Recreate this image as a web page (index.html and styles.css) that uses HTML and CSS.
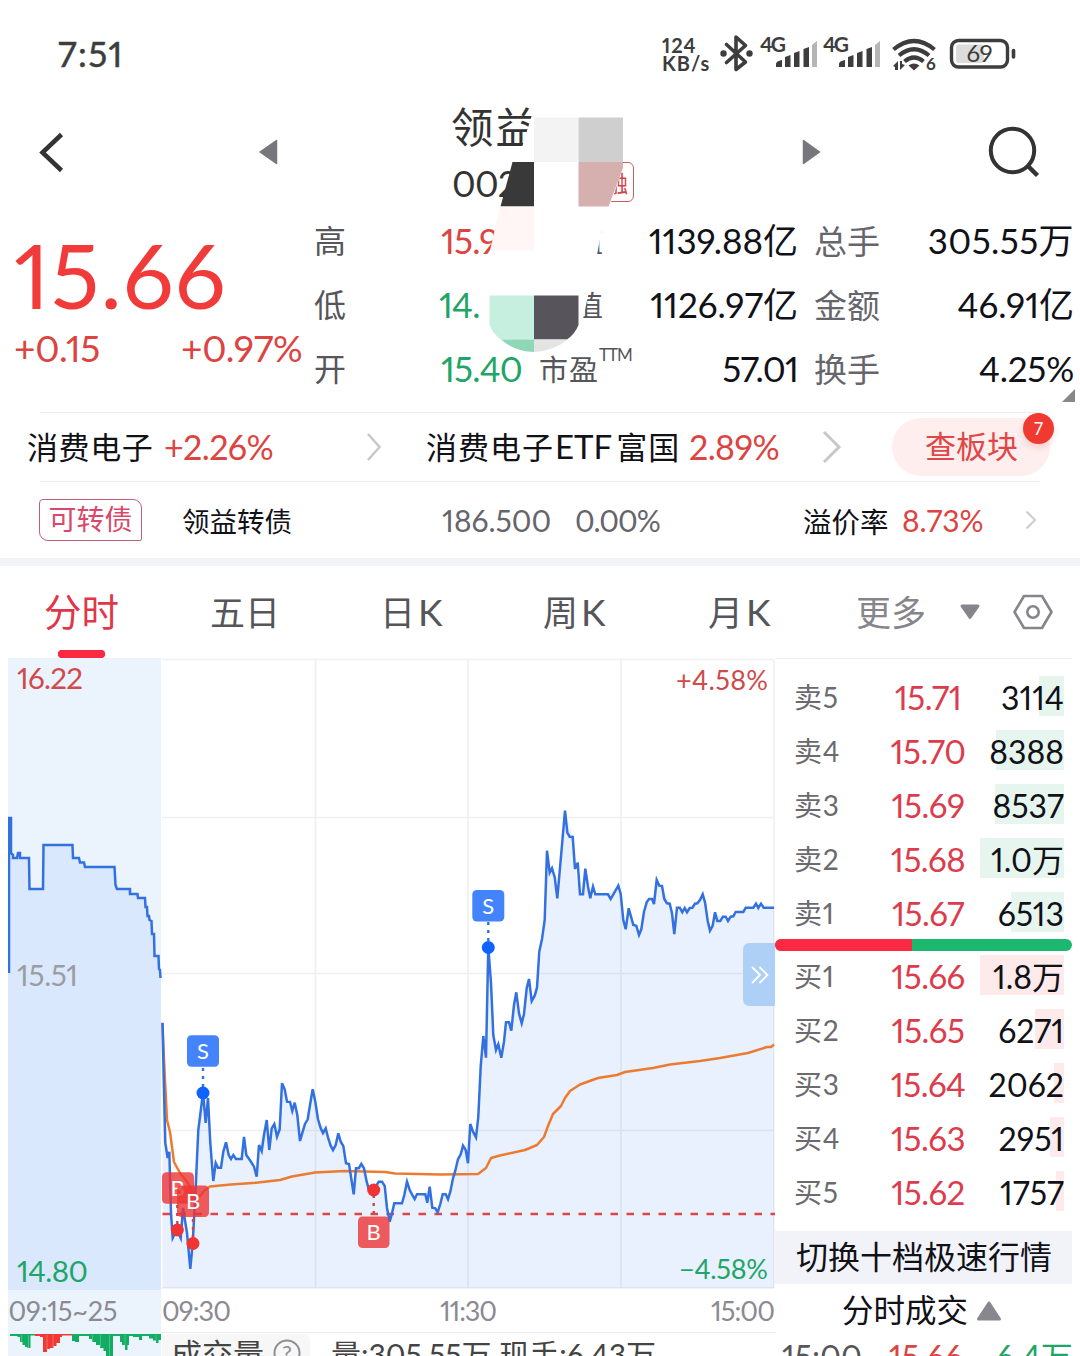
FILE: index.html
```html
<!DOCTYPE html>
<html lang="zh-CN">
<head>
<meta charset="utf-8">
<title>领益 分时</title>
<link rel="stylesheet" href="styles.css">
</head>
<body>
<div class="screen">
  <div class="status">
    <span class="clock">7:51</span>
    <span class="speed"><b>124</b><b>KB/s</b></span>
    <svg class="status-icons" width="300" height="50" viewBox="718 30 300 50">
      <g fill="none" stroke="#3d3d3d" stroke-width="3.6" stroke-linejoin="round" stroke-linecap="round">
        <path d="M726.500 44.500L745.500 62L736 69.500V37L745.500 45.500L726.500 62.500"/>
      </g>
      <circle cx="723.500" cy="53.500" r="3.200" fill="#3d3d3d"/><circle cx="749.500" cy="53.500" r="3.200" fill="#3d3d3d"/>
      <g class="net"><text x="760" y="52" textLength="26">4G</text><text x="823" y="52" textLength="26">4G</text></g>
      <g fill="#3d3d3d">
        <path d="M776 67v-3q0-3 6-4v7zM785 67v-10l5.500-2v12zM794 67v-14l5.500-2v16zM803.500 67v-18l5.500-2v20z"/>
        <path d="M839 67v-3q0-3 6-4v7zM848 67v-10l5.500-2v12zM857 67v-14l5.500-2v16zM866.500 67v-18l5.500-2v20z"/>
        <path fill="#b5b5b5" d="M812 67v-22l5-4v26zM875 67v-22l5-4v26z"/>
      </g>
      <g fill="none" stroke="#3d3d3d" stroke-width="4.200">
        <path d="M893.500 49.500Q914 32.500 934.500 49.500M899 55.500Q914 43 929 55.500M904.500 61.500Q914 53.500 923.500 61.500"/>
      </g>
      <path fill="#3d3d3d" d="M908.500 65.500q5.500-4 11 0l-5.500 5zM893 66l5-5v9h-3v-3zM905 65l-5 5v-9h2v3z"/>
      <text class="six" x="926" y="70">6</text>
      <rect x="951.500" y="40.500" width="56" height="26.500" rx="7" fill="none" stroke="#3d3d3d" stroke-width="3.400"/>
      <rect x="956" y="44.500" width="28" height="18.500" rx="3" fill="#dcdcdc"/>
      <path d="M1013.500 50.500v6.500" stroke="#3d3d3d" stroke-width="3.600" stroke-linecap="round"/>
      <text class="bat" x="966.500" y="62" textLength="26">69</text>
    </svg>
  </div>

  <div class="nav">
    <svg width="28" height="44" viewBox="38 130 28 44"><path d="M61.500 134.500L42.500 152.500L61.500 170.500" fill="none" stroke="#333" stroke-width="4.500"/></svg>
    <svg width="20" height="26" viewBox="258 139 20 26"><path d="M260 152L276.500 140.500V163.500Z" fill="#77767c" stroke="#77767c" stroke-width="1.500" stroke-linejoin="round"/></svg>
    <div class="title">
      <span class="name">领益</span>
      <span class="code"><i>002</i><em>融</em></span>
    </div>
    <svg width="20" height="26" viewBox="802 139 20 26"><path d="M819.500 152L803.500 140.500V163.500Z" fill="#77767c" stroke="#77767c" stroke-width="1.500" stroke-linejoin="round"/></svg>
    <svg width="54" height="54" viewBox="987 125 54 54"><circle cx="1012.500" cy="150.500" r="21.700" fill="none" stroke="#333" stroke-width="4"/><path d="M1028 166L1037.500 175.500" stroke="#333" stroke-width="4.500"/></svg>
    <svg class="mosaic" width="160" height="250" viewBox="480 108 160 250">
      <path fill="#fff" d="M534 108H640V160H623V168L602 228L597 255L583 319V330H579L567 345L534 352L500 345L483 322V255H491L512 180Z"/>
      <path fill="#f3f3f3" d="M534 117.500h44.500v44.500h-44.500z"/><path fill="#cfcfcf" d="M578.500 117.500h44.500v44.500h-44.500z"/>
      <path fill="#393939" d="M512.500 162H534V206.500H500.500Z"/><path fill="#d6b0af" d="M578.500 162H623V168L608.500 206.500H578.500Z"/>
      <path fill="#fff6f5" d="M500 206.500H534V250.500H490Z"/>
      <path fill="#c6efdf" d="M489.500 295.500H534V339.500H501Q493 334 489.500 325Z"/><path fill="#57555b" d="M534 295.500H578.500V325Q575 334 567 339.500H534Z"/>
      <path fill="#90d7b8" d="M501 339.500H534V352Q514 351 501 339.500Z"/><path fill="#e4e4e4" d="M534 339.500H567.500Q554 351 534 352Z"/>
    </svg>
  </div>

  <div class="quote">
    <div class="last red"><span class="price">15.66</span><div class="change"><span class="chg">+0.15</span><span class="pct">+0.97%</span></div></div>
    <div class="stats">
      <span class="k">高</span><span class="v red">15.9</span><span class="k2 frag">值</span><span class="r">1139.88亿</span><span class="k3">总手</span><span class="r wide">305.55万</span>
      <span class="k">低</span><span class="v green low">14.</span><span class="k2 frag">值</span><span class="r">1126.97亿</span><span class="k3">金额</span><span class="r">46.91亿</span>
      <span class="k">开</span><span class="v green">15.40</span><span class="k2">市盈<sup>TTM</sup></span><span class="r tight">57.01</span><span class="k3">换手</span><span class="r pc">4.25%</span>
    </div>
    <svg class="corner" width="13" height="13"><path d="M13 0V13H0Z" fill="#88878c"/></svg>
  </div>

  <div class="sectors">
    <span>消费电子</span><span class="red up">+2.26%</span>
    <svg width="16" height="30" viewBox="0 0 16 30"><path d="M2 2L13.500 15L2 28" fill="none" stroke="#c8c8c8" stroke-width="2.500"/></svg>
    <span class="etf">消费电子<i>ETF</i>富国</span><span class="red">2.89%</span>
    <svg width="20" height="34" viewBox="0 0 20 34"><path d="M2 2L17 17L2 32" fill="none" stroke="#c8c8c8" stroke-width="3"/></svg>
    <div class="pill">查板块<b>7</b></div>
  </div>

  <div class="bond">
    <span class="tag">可转债</span><span>领益转债</span><span class="num">186.500</span><span class="num zero">0.00%</span><span class="prem">溢价率</span><span class="num red">8.73%</span>
    <svg width="12" height="20" viewBox="0 0 12 20"><path d="M1.500 1.500L10 10L1.500 18.500" fill="none" stroke="#ccc" stroke-width="2"/></svg>
  </div>

  <div class="tabs">
    <span class="on">分时</span><span>五日</span><span>日<i>K</i></span><span>周<i>K</i></span><span>月<i>K</i></span><span class="more">更多</span>
    <svg width="22" height="16" viewBox="0 0 22 16"><path d="M3 2H19L11 13.500Z" fill="#86858b" stroke="#86858b" stroke-width="3" stroke-linejoin="round"/></svg>
    <svg width="42" height="38" viewBox="0 0 42 38"><path d="M12 3H30L39.500 19L30 35H12L2.500 19Z" fill="none" stroke="#86858b" stroke-width="2.600" stroke-linejoin="round"/><circle cx="21" cy="19" r="5.700" fill="none" stroke="#86858b" stroke-width="2.600"/></svg>
  </div>

  <div class="main">
    <div class="left">
      <svg class="chart" width="767" height="632" viewBox="8 658 767 632">
        <rect x="8" y="658" width="153" height="632" fill="#ebf3fd"/>
        <path fill="#dae8fd" d="M8 818H11V853L13 858H29L29.500 889H43L43.500 845H72.500L73 858H79L80 862.500H84L85 867H114.500L115.500 885L117 889H130V894H137.500L138 898H145L147 912L151.500 921L154 934L154.500 956H158.500L161 978V1290H8Z"/>
        <path fill="#e9f0fe" d="M162.500 1023L165 1143L168 1158L171 1213L173 1238H181L183 1208L187 1233L190 1269L193 1243L198 1130L203 1093L208 1098L213 1181L216 1163L221 1168L226 1142L231 1159H242L244 1137L248 1158L257 1177L259 1145L267 1120L270 1146L274 1124L280 1129L282 1083L287 1102L292 1111L295 1103L300 1141L308 1119L313 1089L318 1119L326 1130L333 1150L338 1133L346 1163L349 1164L354 1194L356 1168L361 1164L369 1190H374L379 1182H382L390 1222L394 1203H402L407 1182L415 1199L425 1194L430 1187L432 1208L438 1212L443 1194L448 1199L463 1146L468 1163L470 1124L476 1137L483 1036L486 1057L488 947L493 1035L501 1057L506 1022L511 1030L516 992L522 1023L529 979L532 1001L537 988L545 920L547 851L557 898L565 811L573 837L575 869L580 894L585 869L590 898L595 894H608L618 886L626 929L629 908L639 935L647 902L654 904L657 880L662 886L670 904L674 934L677 908H692L703 894L710 930L715 912L728 921L745 908H774V1288H162.500Z"/>
        <g stroke="#2f405c" stroke-opacity=".08" stroke-width="1.600" fill="none">
          <path d="M162 659.500H774M162 817.500H774M162 973.500H774M162 1130.500H774M162 1288H774M315.500 660V1288M468 660V1288M621 660V1288M774 660V1288"/>
        </g>
        <path d="M162.500 1214H775" stroke="#e04548" stroke-width="2.300" stroke-dasharray="7.500 8.500"/>
        <path fill="none" stroke="#ec7b30" stroke-width="2.500" stroke-linejoin="round" d="M162.500 1023L164 1060L167 1120L170 1132L174 1162L180 1173L188 1183L193 1195L199 1197L205 1190L210 1186.500L231 1184.500L256 1182.700L280 1180L292 1176.500L315 1172.500L345 1171L385 1172L395 1173.500L440 1174.500L478 1174L486 1168L491 1158L500 1155.500L525 1150L537 1145L544 1137L548 1126L553 1114L561 1106L565 1098L570 1091L580 1084.500L598 1078L617 1075L625 1072L653 1068L670 1064.500L700 1061L720 1058L748 1053L767 1047L771 1047L774 1044.500"/>
        <g fill="none" stroke="#3371e0" stroke-width="2.500" stroke-linejoin="miter">
          <path d="M9 973V818H11V853L13 855V858H17L18 853H20V858H29L29.500 889H43L43.500 845H72.500L73 858H79L80 862.500H84L85 867H114.500L115.500 885L117 889H130V894H137.500L138 898H145L145.500 907H147L147.500 916H149L149.500 920L151.500 921L152 934H154L154.500 956H158.500L159 969L160 970L160.500 978"/>
          <path d="M162.500 1022.700L163.700 1077L165.300 1143L167.700 1158L169.300 1151.700L171 1213L172.700 1238L177 1230L180.700 1238L183 1208L187 1233L190.300 1269L192.700 1243L195.700 1187L198.300 1130L203 1093L205.700 1123L208 1098L210.300 1143L213.300 1181L215.700 1163L218 1167.700H221L223.300 1151.700L226 1142.300L228.700 1155L231 1159L233.300 1155L236 1159H241.700L244 1137L246.300 1155L251.300 1162.300L254 1166.700L256.700 1176.700L259 1145L261.700 1151L264 1135L266.700 1120L269.300 1150L271.700 1128.300L274.300 1124L277 1136.700L279.700 1129.300L282 1083.300L284.700 1089.300L287 1101.700L290 1102L292.300 1111L294.700 1102.700L297.300 1115L300 1141L302.700 1131.700L305 1124L307.700 1119.300L310 1105L312.700 1089.300L315.300 1101.700L318 1119.300L320.700 1128.300L323 1133L325.700 1128.300L328 1137.300L330.700 1145.700L333 1150L335.700 1145L338.300 1133.300L340.700 1141.700L343.300 1146L346 1163.300L349 1164L351 1176.700L353.700 1194.300L356 1168.300H358.700L361.300 1164L364 1168.300L366.700 1181.700L369 1190H374L376.700 1185L378.700 1181.700H382L384.700 1186L387 1208L389.700 1221.700L392 1213.300L394.300 1203.300H402L404.300 1195L407 1181.700L409.700 1190L412 1194.300L414.700 1199L417 1194.300H425.300L427.300 1202.700L429.700 1186.700L432.300 1207.700L435.300 1208.300L437.700 1212.300L440.300 1204L442.700 1194.300H445.700L448 1199.300L450.300 1191.700L453 1178.300L455.300 1170.700L458 1159.300L460.700 1154.300L463 1145.700L465.700 1150L468 1163.300L470.300 1124L473 1131.700L476 1137.300L478.300 1117L480.700 1066.700L483.300 1036L486 1057.700L488.300 947L491 983L493.300 1035L496 1050L498.300 1044.300L501.300 1057.700L504 1041.700L506 1022.300H509L511.300 1030.700L514 1005L516.300 992.300L519 1013.300L521.700 1023.300L524 1014L526.700 988.300L529 979L531.700 1001L534.700 995.700L537 987.700L539.300 951.700L542 939L544.700 920L547 850.700L549.700 872.700L552 868.300L554.700 877.300L557.300 898.300L562.300 841.700L565 810.700L567.300 832.700L569.700 836.700L572.700 837L575 869L577.700 862.700L580 894.300H583L585.300 868.700L588 886.700L590.300 898.300L593 886.700L595.300 894.300H608L610.700 899L618.300 885.700L620.700 894L623.300 920L625.700 929.300L628.700 908.300L633.300 925L636.300 925.700L639 935L641.300 929.300L644 911.700L646.700 902.300L649 899H652L654 904L656.700 880L659.300 885.700L662 886L664.300 899L667 903.300L669.700 903.700L672 913.300L674.300 934L677 907.700H679.700L682.300 912.300L684.700 908L687 912.300L689.700 908L692.300 907.700L695 903.700L697.300 903.300L700 900L702.700 894.300L705 902.300L707.700 920.700L710 930.700L712.700 925.700L715 912.300L717.300 921H720.300L723 916.700H725.700L728 921L730.700 916.700L733.300 916.300L735.700 912H743.300L745.700 907.700H753.300L756 903.700L758.300 908L761 903.700L763.700 907.700H774"/>
        </g>
        <g stroke-width="2.400" stroke-dasharray="3 5">
          <path stroke="#3371e0" d="M203 1068V1088M488.300 922V942"/>
          <path stroke="#d04347" d="M177.300 1205V1226M193 1219V1240M373.700 1195V1216"/>
        </g>
        <circle cx="203" cy="1093" r="6.500" fill="#0f62fe"/><circle cx="488.300" cy="947.500" r="6.500" fill="#0f62fe"/>
        <g fill="#ee3434"><circle cx="177.300" cy="1230" r="6.500"/><circle cx="193" cy="1243.500" r="6.500"/><circle cx="373.700" cy="1190" r="6.500"/></g>
        <g class="mark">
          <rect x="187" y="1035.300" width="32" height="31.500" rx="4.500" fill="#4384fc"/><text x="203" y="1059">S</text>
          <rect x="472.300" y="890" width="32" height="31.500" rx="4.500" fill="#4384fc"/><text x="488.300" y="914">S</text>
          <g fill-opacity=".8"><rect x="162" y="1172.300" width="32" height="31.500" rx="4.500" fill="#ec3535"/></g><text x="177.500" y="1196">B</text>
          <g fill-opacity=".8"><rect x="177" y="1185.500" width="32" height="31.500" rx="4.500" fill="#ec3535"/><rect x="358" y="1216.500" width="31.500" height="31.500" rx="4.500" fill="#ec3535"/></g>
          <text x="193" y="1209">B</text><text x="373.700" y="1240">B</text>
        </g>
        <path d="M775 943H750Q743 943 743 950V999Q743 1006 750 1006H775Z" fill="#aed0f6"/>
        <path d="M752 967L760 975L752 983M759.500 967L767.500 975L759.500 983" fill="none" stroke="#fff" stroke-width="1.800"/>
        <g class="axis">
          <text x="17" y="688.500" textLength="66" fill="#d04a4b">16.22</text>
          <text x="17" y="985.500" textLength="61" fill="#9a9da2">15.51</text>
          <text x="17" y="1282" textLength="71" fill="#1fa567">14.80</text>
          <text x="676" y="690" textLength="92" class="sm" fill="#d04a4b">+4.58%</text>
          <text x="679" y="1279" textLength="89" class="sm" fill="#1fa567">−4.58%</text>
        </g>
      </svg>
      <svg class="times" width="767" height="42" viewBox="8 1290 767 42">
        <rect x="8" y="1290" width="153" height="42" fill="#ebf3fd"/>
        <text x="8.500" y="1321" textLength="109">09:15~25</text><text x="162" y="1321" textLength="69">09:30</text><text x="440" y="1321" textLength="57">11:30</text><text x="711" y="1321" textLength="64">15:00</text>
      </svg>
      <div class="volume">
        <svg width="154" height="24" viewBox="8 1332 154 24">
          <rect x="8" y="1332" width="153" height="24" fill="#ebf3fd"/>
          <path fill="#10ad62" d="M10 1334H37V1335.500H30.500V1348H27.500V1347H25V1345H22.500V1342H20V1337H17.500V1336H10ZM72 1334H161V1340H158.500V1343H156V1340.500H153V1338.500H149V1336H142V1340H139V1337H133V1336H129V1345H127.500V1350H125V1345H122V1342H120V1336H113V1356H106V1351H103.500V1348H100V1345H96V1342H92V1339H89V1336H79V1342H75V1341H72Z"/>
          <path fill="#f23836" d="M35 1334H72V1335.500H62V1337H60V1343H56.500V1346H53.500V1348H50V1349H47V1352H43V1337H40V1336H35Z"/>
          <path d="M21.500 1335V1347M28.500 1335V1348M47 1335V1350M53 1335V1347M92.500 1335V1342M100.500 1335V1347M109.500 1335V1356M125 1335V1346M156 1335V1342" stroke="#fff" stroke-opacity=".35" stroke-width=".7"/>
        </svg>
        <div class="vtab">成交量<svg width="30" height="30" viewBox="0 0 30 30"><circle cx="15" cy="15" r="12.500" fill="none" stroke="#8e8e92" stroke-width="2"/><text x="15" y="23">?</text></svg></div>
        <span class="vtext">量:<i>305.55</i>万 现手:<i>6.43</i>万</span>
      </div>
    </div>

    <div class="book">
      <div class="side sell">
        <div class="row"><span>卖5</span><b>15.71</b><u><i style="width:25px"></i>3114</u></div>
        <div class="row"><span>卖4</span><b>15.70</b><u><i style="width:68px"></i>8388</u></div>
        <div class="row"><span>卖3</span><b>15.69</b><u><i style="width:69px"></i>8537</u></div>
        <div class="row"><span>卖2</span><b>15.68</b><u><i style="width:84px"></i>1.0万</u></div>
        <div class="row"><span>卖1</span><b>15.67</b><u><i style="width:53px"></i>6513</u></div>
      </div>
      <div class="ratio"><i></i></div>
      <div class="side buy">
        <div class="row"><span>买1</span><b>15.66</b><u><i style="width:84px"></i>1.8万</u></div>
        <div class="row"><span>买2</span><b>15.65</b><u><i style="width:29px"></i>6271</u></div>
        <div class="row"><span>买3</span><b>15.64</b><u><i style="width:10px"></i>2062</u></div>
        <div class="row"><span>买4</span><b>15.63</b><u><i style="width:14px"></i>2951</u></div>
        <div class="row"><span>买5</span><b>15.62</b><u><i style="width:8px"></i>1757</u></div>
      </div>
      <div class="switch">切换十档极速行情</div>
      <div class="deals">分时成交<svg width="26" height="22" viewBox="0 0 26 22"><path d="M13 3L23.500 19H2.500Z" fill="#88878d" stroke="#88878d" stroke-width="3" stroke-linejoin="round"/></svg></div>
      <div class="tick"><span>15:00</span><span class="red">15.66</span><span class="green">6.4万</span></div>
    </div>
  </div>
</div>
</body>
</html>
```

FILE: styles.css
```css
* { box-sizing: border-box; }
body { margin: 0; background: #fff; }
i, em, b, u { font-style: normal; font-weight: 400; text-decoration: none; }
svg { display: block; flex: none; }
.screen {
  width: 1080px; height: 1356px; overflow: hidden; background: #fff; color: #111118;
  font-family: "Lato", "Noto Sans CJK SC", sans-serif; white-space: nowrap;
  font-variant-numeric: proportional-nums;
}
.screen .red { color: #dc4442; }
.screen .green { color: #1fa567; }

/* status bar */
.status { display: flex; height: 90px; padding: 28px 0 0 58px; color: #3d3d3d; }
.clock { width: 604px; font-size: 35px; line-height: 50px; letter-spacing: 1.500px; -webkit-text-stroke: .5px #3d3d3d; }
.speed { display: flex; flex-direction: column; width: 56px; padding-top: 8px; }
.speed b { font-size: 20px; line-height: 18px; font-weight: 700; letter-spacing: 1px; }
.status-icons { margin-top: 2px; }
.net text { font-size: 21px; font-weight: 700; fill: #3d3d3d; }
.six { font-size: 17px; font-weight: 700; fill: #3d3d3d; }
.bat { font-size: 24px; fill: #3d3d3d; }

/* stock title */
.nav {
  position: relative; display: grid; height: 119px; padding-left: 38px;
  grid-template-columns: 220px 194px 350px 185px 54px; align-items: start;
}
.nav > svg:nth-of-type(1) { margin-top: 40px; }
.nav > svg:nth-of-type(2), .nav > svg:nth-of-type(3) { margin-top: 49px; }
.nav > svg:nth-of-type(4) { margin-top: 35px; }
.title { display: flex; flex-direction: column; padding-top: 12px; color: #333; }
.name { font-size: 42.500px; line-height: 50px; letter-spacing: 2px; margin-left: -1px; }
.code { display: flex; height: 40px; margin-top: 10px; }
.code i { width: 128px; font-size: 36px; line-height: 42px; letter-spacing: -.8px; }
.code em {
  width: 54px; height: 40px; border: 1.500px solid #d05a5a; border-radius: 6px;
  font-size: 23px; line-height: 40px; text-align: right; padding-right: 5px; color: #cf4444;
}
.nav .mosaic { position: absolute; left: 480px; top: 18px; z-index: 2; margin: 0; }

/* quote block */
.quote { position: relative; display: flex; height: 203px; padding-left: 14px; }
.last { width: 300px; padding-top: 15px; }
.price { display: block; font-size: 90px; line-height: 100px; height: 101px; letter-spacing: 1px; color: #f13b3b; }
.change { display: flex; font-size: 37px; line-height: 46px; }
.chg { width: 167px; letter-spacing: -.2px; }
.pct { letter-spacing: -.3px; }
.stats {
  display: grid; grid-template-columns: 125px 101px 76px 182px 82px 194px;
  grid-auto-rows: 64px; line-height: 63px; font-size: 35px; height: 192px;
}
.k { font-size: 32px; color: #55555a; line-height: 64px; }
.v { padding-left: 2px; letter-spacing: -.8px; }
.v.low { padding-left: 0; }
.k2 { font-size: 29px; color: #55555a; line-height: 66px; letter-spacing: 1px; margin-left: -1px; }
.k2.frag { padding-left: 35px; }
.k2 sup { font-size: 17px; line-height: 0; vertical-align: 20px; letter-spacing: -1px; }
.k3 { font-size: 33px; color: #66656b; padding-left: 16px; line-height: 64px; }
.r { text-align: right; }
.r.wide { letter-spacing: .4px; }
.r.tight { letter-spacing: -.8px; }
.r.pc { letter-spacing: -.2px; }
.corner { position: absolute; right: 5px; bottom: 10px; }

/* sector row */
.sectors {
  display: grid; grid-template-columns: 137px 202px 60px 263px 133px 70px 158px; align-items: center;
  height: 70px; margin-right: 30px; padding-left: 27px; font-size: 31px;
  background: linear-gradient(#ececec, #ececec) 40px 0 / 1000px 1px no-repeat, linear-gradient(#ececec, #ececec) 40px 69px / 1000px 1px no-repeat;
}
.sectors > span { margin-bottom: 4px; letter-spacing: .6px; }
.sectors > .red { font-size: 34px; letter-spacing: -.6px; margin-bottom: 2px; }
.sectors > .etf { letter-spacing: 1px; }
.etf i { margin: 0 4px 0 1px; font-size: 33px; letter-spacing: 0; }
.pill {
  position: relative; height: 58px; border-radius: 29px; background: #feeeed; color: #e04646;
  font-size: 31px; line-height: 57px; padding-left: 33px;
}
.pill b {
  position: absolute; right: -4px; top: -5px; width: 31px; height: 31px; border-radius: 50%;
  background: #ef3931; color: #fff; font-size: 17px; line-height: 31px; text-align: center; box-shadow: 0 4px 6px rgba(200,50,40,.15);
}

/* convertible bond row */
.bond {
  display: grid; grid-template-columns: 143px 260px 133px 228px 99px 123px 12px; align-items: center;
  height: 84px; padding: 0 0 0 39px; font-size: 27.500px; border-bottom: 8px solid #f2f3f8;
}
.tag {
  width: 103px; height: 42px; border: 1.500px solid #c0607a; border-radius: 4px 9px 2px 9px;
  color: #d9486a; font-size: 28px; line-height: 39px; text-align: center;
}
.num { font-size: 30px; color: #66656b; letter-spacing: 0; }
.num.zero { letter-spacing: -1px; }
.prem { font-size: 28.500px; }

/* period tabs */
.tabs {
  display: grid; grid-template-columns: 166px 170px 163px 165px 148px 103px 53px 42px; align-items: center;
  height: 92px; padding-left: 44px; font-size: 35px; color: #55555a;
}
.tabs span { line-height: 92px; height: 92px; }
.tabs span i { margin-left: 3px; font-size: 37px; }
.tabs .on {
  width: 76px; font-size: 37.500px; color: #e0364a;
  background:
    radial-gradient(circle at 18px 88px, #fb2a42 4px, transparent 4.500px),
    radial-gradient(circle at 57px 88px, #fb2a42 4px, transparent 4.500px),
    linear-gradient(#fb2a42, #fb2a42) 18px 84px / 39px 8px no-repeat;
}
.tabs .more { color: #86858b; }

/* chart */
.main { display: flex; height: 698px; }
.left { width: 775px; padding-left: 8px; }
.axis text { font-size: 29.500px; }
.axis .sm { font-size: 27px; }
.mark text { font-size: 22px; fill: #fff; text-anchor: middle; }
.times text { font-size: 27px; fill: #8b8a90; }
.volume {
  display: flex; height: 24px; overflow: hidden; color: #444; font-size: 31px; line-height: 44px;
  background: linear-gradient(#ececec, #ececec) 154px 0 / 613px 1px no-repeat;
}
.vtab { display: flex; width: 148px; height: 40px; margin-top: 2px; padding-left: 9px; line-height: 40px; background: #f7f7f8; border-radius: 6px 6px 0 0; }
.vtab svg { margin: 4px 0 0 8px; }
.vtab text { font-size: 22px; fill: #8e8e92; text-anchor: middle; }
.vtext { padding-left: 21px; font-size: 30px; }

/* order book */
.book { width: 297px; border-top: 1px solid #ececec; }
.sell { padding-top: 12px; }
.row { display: grid; grid-template-columns: 77px 114px 79px; height: 54px; line-height: 53px; padding-left: 19px; }
.row span { font-size: 28px; color: #6b6a6e; letter-spacing: .8px; }
.row b { text-align: center; font-size: 33px; letter-spacing: -.5px; color: #dc3c4c; }
.row u { position: relative; z-index: 0; font-size: 32px; text-align: right; }
.row u i { position: absolute; z-index: -1; right: 0; top: 5px; height: 40px; background: #e6f6ef; }
.buy .row u i { background: #feeaeb; }
.ratio { height: 12px; margin: -2px 0 -1px; border-radius: 6px; background: #1cb870; overflow: hidden; }
.ratio i { display: block; width: 137px; height: 12px; background: #fb2a42; }
.switch { height: 53px; margin-top: 11px; padding-left: 21px; background: #f2f3f8; font-size: 32px; line-height: 52px; }
.deals { display: flex; height: 53px; padding-left: 67px; font-size: 31.500px; line-height: 52px; }
.deals svg { margin: 16px 0 0 8px; }
.tick { display: grid; grid-template-columns: 107px 107px 75px; padding-left: 7px; font-size: 32px; line-height: 40px; color: #55555a; }
```
